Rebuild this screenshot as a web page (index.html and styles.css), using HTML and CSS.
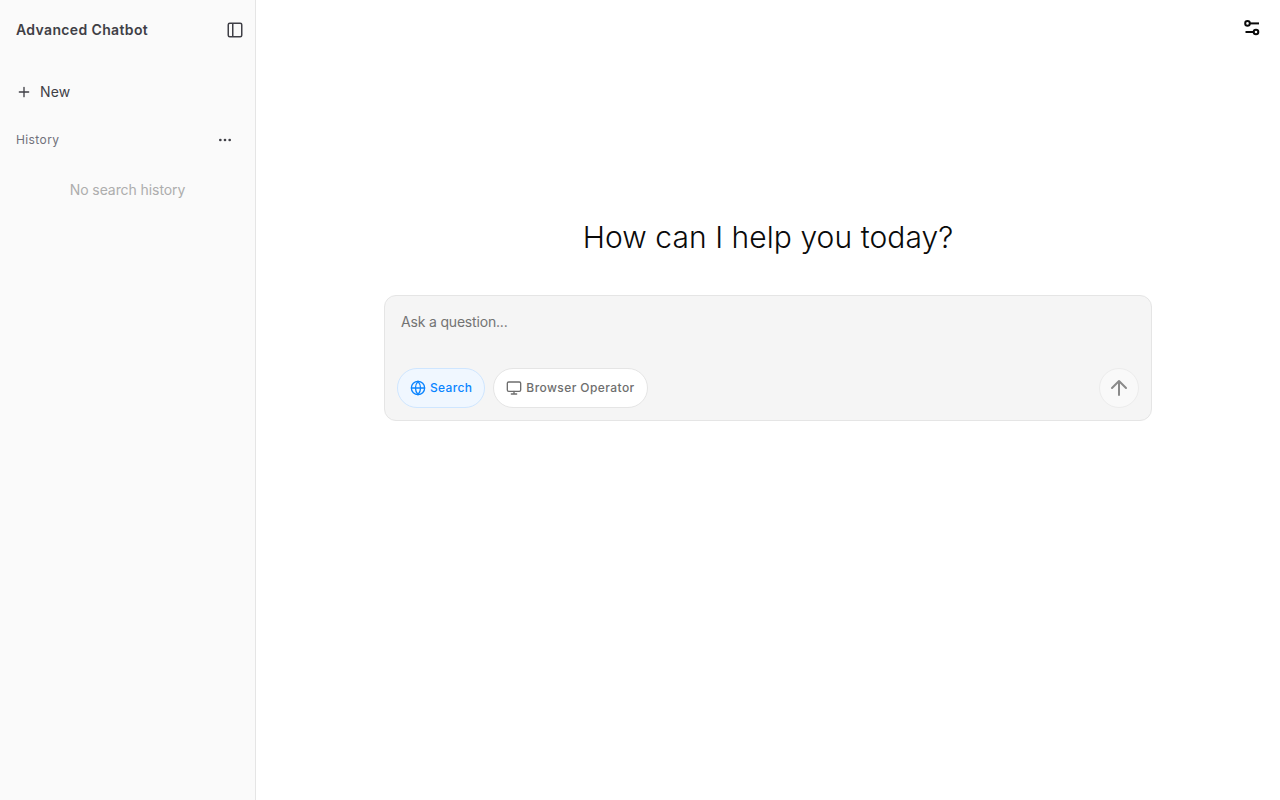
FILE: index.html
```html
<!DOCTYPE html>
<html lang="en">
<head>
<meta charset="utf-8">
<title>Advanced Chatbot</title>
<link rel="stylesheet" href="styles.css">
</head>
<body>
<div class="app">
  <aside class="sidebar">
    <div class="side-head">
      <span class="brand">Advanced Chatbot</span>
      <svg class="icon18 dark" viewBox="0 0 24 24" fill="none" stroke="currentColor" stroke-width="2"><rect x="3" y="3" width="18" height="18" rx="2"/><path d="M9 3v18"/></svg>
    </div>
    <div class="new-row">
      <svg class="icon16 dark" viewBox="0 0 24 24" fill="none" stroke="currentColor" stroke-width="2" stroke-linecap="round"><path d="M5 12h14M12 5v14"/></svg>
      <span>New</span>
    </div>
    <div class="hist-head">
      <span>History</span>
      <svg class="icon16 dark" viewBox="0 0 24 24" fill="currentColor"><circle cx="5" cy="12" r="2"/><circle cx="12" cy="12" r="2"/><circle cx="19" cy="12" r="2"/></svg>
    </div>
    <div class="empty">No search history</div>
  </aside>
  <main class="main">
    <div class="topbar">
      <svg class="icon18 black" viewBox="0 0 18 18" fill="none" stroke="currentColor" stroke-width="2"><circle cx="4.5" cy="4.4" r="2.3"/><path d="M6.8 4.4H16"/><circle cx="13" cy="13" r="2.3"/><path d="M2.5 13h8.2"/></svg>
    </div>
    <div class="center">
      <h1 class="title">How can I help you today?</h1>
      <div class="composer">
        <div class="placeholder">Ask a question...</div>
        <div class="tools">
          <div class="pill pill-on">
            <svg class="icon16" viewBox="0 0 24 24" fill="none" stroke="currentColor" stroke-width="2"><circle cx="12" cy="12" r="10"/><path d="M2 12h20M12 2a15 15 0 0 1 0 20a15 15 0 0 1 0-20z"/></svg>
            <span>Search</span>
          </div>
          <div class="pill">
            <svg class="icon16" viewBox="0 0 24 24" fill="none" stroke="currentColor" stroke-width="2" stroke-linecap="round"><rect x="2" y="3" width="20" height="14" rx="2"/><path d="M8 21h8M12 17v4"/></svg>
            <span>Browser Operator</span>
          </div>
          <div class="send">
            <svg class="icon24" viewBox="0 0 24 24" fill="none" stroke="currentColor" stroke-width="2" stroke-linecap="round" stroke-linejoin="round"><path d="M5 12l7-7 7 7M12 19V5"/></svg>
          </div>
        </div>
      </div>
    </div>
  </main>
</div>
</body>
</html>
```
FILE: styles.css
```css
* { box-sizing: border-box; }
html, body { margin: 0; height: 100%; }
body { font-family: Inter, "Liberation Sans", sans-serif; background: #fff; color: #0a0a0a; }
.app { display: flex; height: 800px; overflow: hidden; }
.sidebar { width: 256px; flex: none; background: #fafafa; border-right: 1px solid #e5e5e5; display: flex; flex-direction: column; }
.side-head { height: 60px; padding: 0 11px 0 16px; display: flex; align-items: center; justify-content: space-between; }
.brand { font-size: 14px; font-weight: 600; line-height: 20px; color: #3f3f46; letter-spacing: 0.36px; }
.icon16 { width: 16px; height: 16px; flex: none; display: block; }
.icon18 { width: 18px; height: 18px; flex: none; display: block; }
.icon24 { width: 24px; height: 24px; flex: none; display: block; }
.dark { color: #3f3f46; }
.black { color: #0a0a0a; }
.new-row { margin-top: 16px; height: 32px; padding: 0 16px; display: flex; align-items: center; gap: 8px; font-size: 14px; line-height: 20px; color: #3f3f46; letter-spacing: 0.2px; }
.hist-head { margin-top: 16px; height: 32px; padding: 0 22px 0 16px; display: flex; align-items: center; justify-content: space-between; font-size: 12px; line-height: 16px; color: #71717a; letter-spacing: 0.4px; }
.empty { margin-top: 24px; height: 20px; text-align: center; font-size: 14px; line-height: 20px; color: #adadad; letter-spacing: -0.08px; }
.main { flex: 1; min-width: 0; display: flex; flex-direction: column; }
.topbar { height: 56px; padding: 19px 19px 0 0; display: flex; justify-content: flex-end; }
.center { display: flex; flex-direction: column; align-items: center; padding-top: 159px; }
.title { margin: 0; height: 44px; font-size: 30px; line-height: 44px; font-weight: 300; color: #0a0a0a; text-align: center; letter-spacing: 0.06px; }
.composer { margin-top: 36px; width: 768px; height: 126px; background: #f5f5f5; border: 1px solid #e5e5e5; border-radius: 12px; display: flex; flex-direction: column; justify-content: space-between; padding: 16px 12px 12px; }
.placeholder { padding-left: 4px; font-size: 14px; line-height: 20px; color: #737373; letter-spacing: -0.18px; }
.tools { display: flex; align-items: center; gap: 8px; }
.pill { height: 40px; padding: 0 12px; border: 1px solid #e5e5e5; border-radius: 20px; background: #fff; display: flex; align-items: center; gap: 4px; font-size: 12px; font-weight: 500; line-height: 16px; color: #6e6e6e; letter-spacing: 0.42px; }
.pill-on { background: #f0f7ff; border-color: #cfe6ff; color: #0a84ff; letter-spacing: 0.34px; }
.send { margin-left: auto; width: 40px; height: 40px; border-radius: 50%; background: #f9f9f9; border: 1px solid #ececec; display: flex; align-items: center; justify-content: center; color: #8a8a8a; }
```
